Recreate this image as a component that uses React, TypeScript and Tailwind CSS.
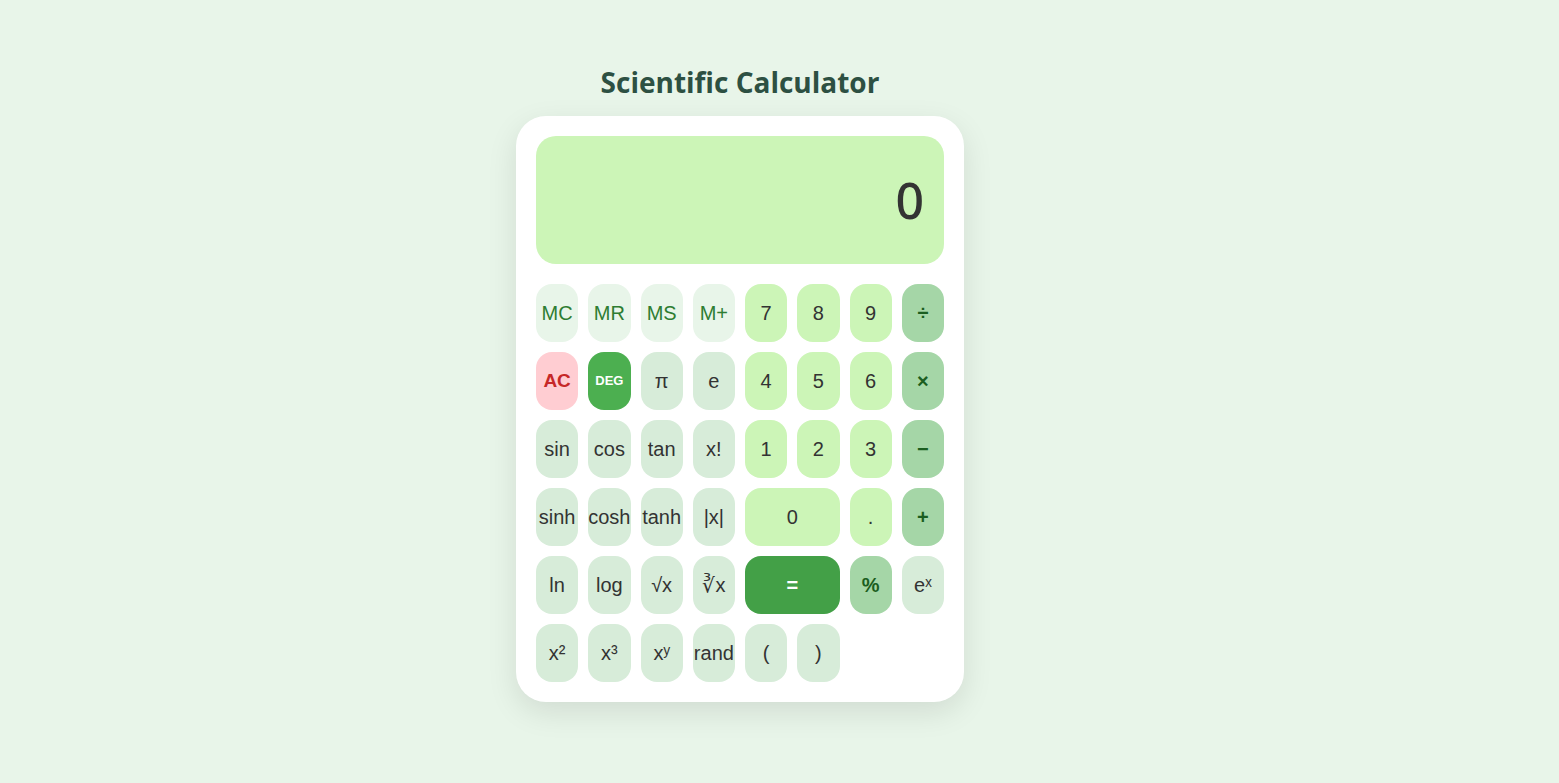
import React from "react";

type Kind = "mem" | "num" | "fn" | "op" | "ac" | "deg" | "eq";

type Key = {
  label: React.ReactNode;
  kind: Kind;
  span?: boolean;
};

const styles: Record<Kind, string> = {
  mem: "bg-[#e8f5e9] text-[#2e7d32] text-[20px]",
  num: "bg-[#ccf5b7] text-[#333333] text-[20px]",
  fn: "bg-[#d7ecd9] text-[#333333] text-[20px]",
  op: "bg-[#a5d6a7] text-[#1b5e20] font-bold text-[20px]",
  ac: "bg-[#ffcdd2] text-[#c62828] font-bold text-[19px]",
  deg: "bg-[#4caf50] text-white font-bold text-[13px]",
  eq: "bg-[#43a047] text-white font-bold text-[20px]",
};

const keys: Key[] = [
  { label: "MC", kind: "mem" },
  { label: "MR", kind: "mem" },
  { label: "MS", kind: "mem" },
  { label: "M+", kind: "mem" },
  { label: "7", kind: "num" },
  { label: "8", kind: "num" },
  { label: "9", kind: "num" },
  { label: "÷", kind: "op" },

  { label: "AC", kind: "ac" },
  { label: "DEG", kind: "deg" },
  { label: "π", kind: "fn" },
  { label: "e", kind: "fn" },
  { label: "4", kind: "num" },
  { label: "5", kind: "num" },
  { label: "6", kind: "num" },
  { label: "×", kind: "op" },

  { label: "sin", kind: "fn" },
  { label: "cos", kind: "fn" },
  { label: "tan", kind: "fn" },
  { label: "x!", kind: "fn" },
  { label: "1", kind: "num" },
  { label: "2", kind: "num" },
  { label: "3", kind: "num" },
  { label: "−", kind: "op" },

  { label: "sinh", kind: "fn" },
  { label: "cosh", kind: "fn" },
  { label: "tanh", kind: "fn" },
  { label: "|x|", kind: "fn" },
  { label: "0", kind: "num", span: true },
  { label: ".", kind: "num" },
  { label: "+", kind: "op" },

  { label: "ln", kind: "fn" },
  { label: "log", kind: "fn" },
  { label: "√x", kind: "fn" },
  { label: "∛x", kind: "fn" },
  { label: "=", kind: "eq", span: true },
  { label: "%", kind: "op" },
  { label: "eˣ", kind: "fn" },

  { label: "x²", kind: "fn" },
  { label: "x³", kind: "fn" },
  { label: "xʸ", kind: "fn" },
  { label: "rand", kind: "fn" },
  { label: "(", kind: "fn" },
  { label: ")", kind: "fn" },
];

const App = () => {
  return (
    <div className="min-h-screen bg-[#e8f5e9] flex flex-col items-center pt-[62px] pb-[80px] pr-[79px]">
      <h1 className="text-[28px] leading-[40px] font-bold text-[#2d5042] font-['Open_Sans',sans-serif] mb-[14px]">
        Scientific Calculator
      </h1>

      <div className="w-[448px] bg-white rounded-[30px] p-5 shadow-[0_10px_30px_rgba(0,0,0,0.1)]">
        {/* display */}
        <div className="h-[128px] rounded-[20px] bg-[#ccf5b7] flex items-center justify-end px-5 mb-5">
          <span className="text-[50px] font-medium text-[#333333] font-['Noto_Sans',sans-serif] leading-none">0</span>
        </div>

        <div className="grid grid-cols-8 gap-[10px]">
          {keys.map((k, i) => (
            <button
              key={i}
              className={`h-[58px] rounded-[16px] flex items-center justify-center font-['Liberation_Sans',Arial,sans-serif] ${styles[k.kind]} ${k.span ? "col-span-2" : ""}`}
            >
              {k.label}
            </button>
          ))}
        </div>
      </div>
    </div>
  );
};

export default App;
